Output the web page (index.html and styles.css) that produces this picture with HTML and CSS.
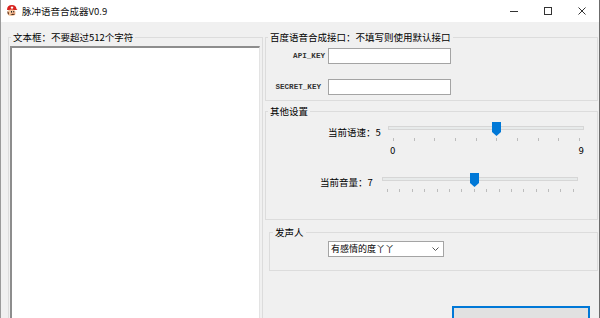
FILE: index.html
```html
<!DOCTYPE html>
<html lang="zh-CN">
<head>
    <meta charset="UTF-8">
    <title>脉冲语音合成器V0.9</title>
    <link rel="stylesheet" href="styles.css">
</head>
<body>
<div class="window">
    <div class="titlebar">
        <svg class="app-icon" width="13" height="13" viewBox="0 0 13 13">
            <path d="M2 6 Q2 1 7 1 Q11 1 11.5 5 L12.5 6 L1.5 6 Z" fill="#d8231f"/>
            <circle cx="7" cy="3.6" r="1.2" fill="#fff"/>
            <ellipse cx="6.5" cy="8.8" rx="4" ry="3.3" fill="#f4c39a"/>
            <path d="M2.6 7 Q2 9.5 3.4 11 L4 9 Z" fill="#5a2a12"/>
            <rect x="6" y="7" width="1" height="1.6" fill="#222"/>
            <rect x="8.2" y="7" width="1" height="1.6" fill="#222"/>
            <ellipse cx="8.6" cy="9.4" rx="1.6" ry="1" fill="#e59a76"/>
            <path d="M5.2 10.3 Q7.5 9.6 10.4 10.6 Q8 11.6 5.2 10.3 Z" fill="#2a1508"/>
        </svg>
        <span class="app-title">脉冲语音合成器V0.9</span>
        <div class="caption">
            <span class="cap-btn">
                <svg width="10" height="10" viewBox="0 0 10 10"><path d="M1 5.5 H9" stroke="#333" stroke-width="1"/></svg>
            </span>
            <span class="cap-btn">
                <svg width="10" height="10" viewBox="0 0 10 10"><rect x="1.5" y="1.5" width="7" height="7" fill="none" stroke="#333" stroke-width="1"/></svg>
            </span>
            <span class="cap-btn">
                <svg width="10" height="10" viewBox="0 0 10 10"><path d="M1.5 1.5 L8.5 8.5 M8.5 1.5 L1.5 8.5" stroke="#333" stroke-width="1"/></svg>
            </span>
        </div>
    </div>

    <div class="client">
        <fieldset class="group group-text">
            <legend class="group-title">文本框：不要超过512个字符</legend>
            <textarea class="text-box"></textarea>
        </fieldset>

        <div class="right-col">
            <fieldset class="group group-api">
                <legend class="group-title">百度语音合成接口：不填写则使用默认接口</legend>
                <div class="key-grid">
                    <label class="key-label">API_KEY</label>
                    <input class="key-input" type="text">
                    <label class="key-label key-label-secret">SECRET_KEY</label>
                    <input class="key-input" type="text">
                </div>
            </fieldset>

            <fieldset class="group group-other">
                <legend class="group-title">其他设置</legend>
                <div class="slider-row row-speed">
                    <span class="slider-label">当前语速：5</span>
                    <div class="slider-wrap">
                        <div class="slider" style="--v:0.5556">
                            <div class="track"></div>
                            <svg class="thumb" width="9" height="14" viewBox="0 0 9 14"><path d="M0 0 H9 V10 L4.5 14 L0 10 Z" fill="#0078d7"/></svg>
                            <div class="ticks">
                                <i></i><i></i><i></i><i></i><i></i><i></i><i></i><i></i><i></i><i></i>
                            </div>
                        </div>
                        <div class="scale"><span>0</span><span>9</span></div>
                    </div>
                </div>
                <div class="slider-row row-volume">
                    <span class="slider-label">当前音量：7</span>
                    <div class="slider-wrap">
                        <div class="slider" style="--v:0.4667">
                            <div class="track"></div>
                            <svg class="thumb" width="9" height="14" viewBox="0 0 9 14"><path d="M0 0 H9 V10 L4.5 14 L0 10 Z" fill="#0078d7"/></svg>
                            <div class="ticks">
                                <i></i><i></i><i></i><i></i><i></i><i></i><i></i><i></i>
                                <i></i><i></i><i></i><i></i><i></i><i></i><i></i><i></i>
                            </div>
                        </div>
                    </div>
                </div>
            </fieldset>

            <fieldset class="group group-voice">
                <legend class="group-title">发声人</legend>
                <div class="combo">
                    <span class="combo-text">有感情的度丫丫</span>
                    <svg class="combo-arrow" width="7" height="4" viewBox="0 0 7 4"><path d="M0.5 0.5 L3.5 3.5 L6.5 0.5" fill="none" stroke="#555" stroke-width="1"/></svg>
                </div>
            </fieldset>

            <button class="action-btn"></button>
        </div>
    </div>
</div>
</body>
</html>
```

FILE: styles.css
```css
body {
    margin: 0;
    font-family: "Noto Sans CJK SC", "Noto Sans", sans-serif;
    font-size: 9.5px;
    color: #000;
    background: #f0f0f0;
}

.window {
    width: 600px;
    height: 318px;
    box-sizing: border-box;
    border-left: 1px solid #9a9a9a;
    border-right: 1px solid #6b6b6b;
    background: #f0f0f0;
    overflow: hidden;
}

.titlebar {
    height: 22px;
    background: #fff;
    display: flex;
    align-items: center;
    padding-left: 4px;
}

.app-icon {
    margin-right: 4px;
    margin-top: -1px;
}

.app-title {
    font-size: 9.5px;
    line-height: 22px;
    color: #111;
}

.caption {
    margin-left: auto;
    display: flex;
    height: 22px;
}

.cap-btn {
    width: 34px;
    height: 22px;
    display: flex;
    align-items: center;
    justify-content: center;
}

.client {
    display: flex;
    gap: 2px;
    padding: 8px 1px 0 7px;
}

.group {
    margin: 0;
    padding: 0 2px;
    border: 1px solid #dcdcdc;
    min-width: 0;
    box-sizing: border-box;
}

.group-title {
    padding: 0 2px;
    line-height: 15px;
    font-size: 9.5px;
}

/* left text box */
.group-text {
    width: 255px;
    height: 300px;
    flex: none;
    padding: 1px 2px 0 1px;
}

.group-text .group-title {
    margin-left: 1px;
}

.text-box {
    display: block;
    width: 250px;
    height: 290px;
    margin: 0;
    box-sizing: border-box;
    background: #fff;
    border-top: 2px solid #8d8d8d;
    border-left: 2px solid #8d8d8d;
    border-right: 1px solid #e3e3e3;
    border-bottom: 1px solid #e3e3e3;
    resize: none;
}

.right-col {
    width: 333px;
    flex: none;
    display: flex;
    flex-direction: column;
}

/* api keys */
.group-api {
    padding-bottom: 5px;
}

.key-grid {
    display: grid;
    grid-template-columns: 57px 123px;
    column-gap: 3px;
    row-gap: 15px;
    align-items: center;
    margin-top: 3px;
}

.key-label {
    font-family: "Liberation Mono", "DejaVu Sans Mono", monospace;
    font-size: 7.6px;
    font-weight: bold;
    text-align: right;
    color: #333;
}

.key-label-secret {
    padding-right: 4px;
}

.key-input {
    width: 123px;
    height: 16px;
    box-sizing: border-box;
    margin: 0;
    border: 1px solid #a4a4a4;
    background: #fff;
}

/* sliders */
.group-other {
    margin-top: 3px;
    height: 116px;
}

.slider-row {
    display: flex;
    align-items: flex-start;
}

.row-speed {
    margin-top: 3px;
    margin-left: 60px;
}

.row-volume {
    margin-top: 16px;
    margin-left: 52px;
}

.slider-label {
    width: 60px;
    flex: none;
    line-height: 15px;
}

.row-speed .slider-label {
    margin-top: 3px;
}

.row-volume .slider-label {
    margin-top: 2px;
    width: 62px;
}

.slider {
    position: relative;
    width: 196px;
    height: 20px;
}

.track {
    position: absolute;
    left: 0;
    right: 0;
    top: 4px;
    height: 4px;
    box-sizing: border-box;
    background: #e7eaea;
    border: 1px solid #d6d6d6;
}

.thumb {
    position: absolute;
    top: 0;
    left: calc(5px + var(--v) * 186px - 4px);
}

.ticks {
    position: absolute;
    left: 5px;
    right: 4px;
    top: 16px;
    display: flex;
    justify-content: space-between;
}

.ticks i {
    width: 1px;
    height: 3px;
    background: #bcbcbc;
}

.scale {
    display: flex;
    justify-content: space-between;
    padding: 3px 0 0 2px;
    line-height: 12px;
    font-family: "DejaVu Sans", sans-serif;
    font-size: 8.5px;
}

/* voice */
.group-voice {
    margin-top: 5px;
    margin-left: 4px;
    width: 329px;
    padding: 1px 2px 13px 3px;
}

.combo {
    width: 116px;
    height: 16px;
    box-sizing: border-box;
    margin-left: 55px;
    border: 1px solid #a4a4a4;
    background: #fff;
    display: flex;
    align-items: center;
    padding: 0 4px 0 2px;
}

.combo-text {
    font-size: 9px;
    line-height: 14px;
}

.combo-arrow {
    margin-left: auto;
}

.action-btn {
    margin: 35px 0 0 187px;
    width: 138px;
    height: 26px;
    flex: none;
    box-sizing: border-box;
    background: #e1e1e1;
    border: 2px solid #0078d7;
    padding: 0;
}
```
